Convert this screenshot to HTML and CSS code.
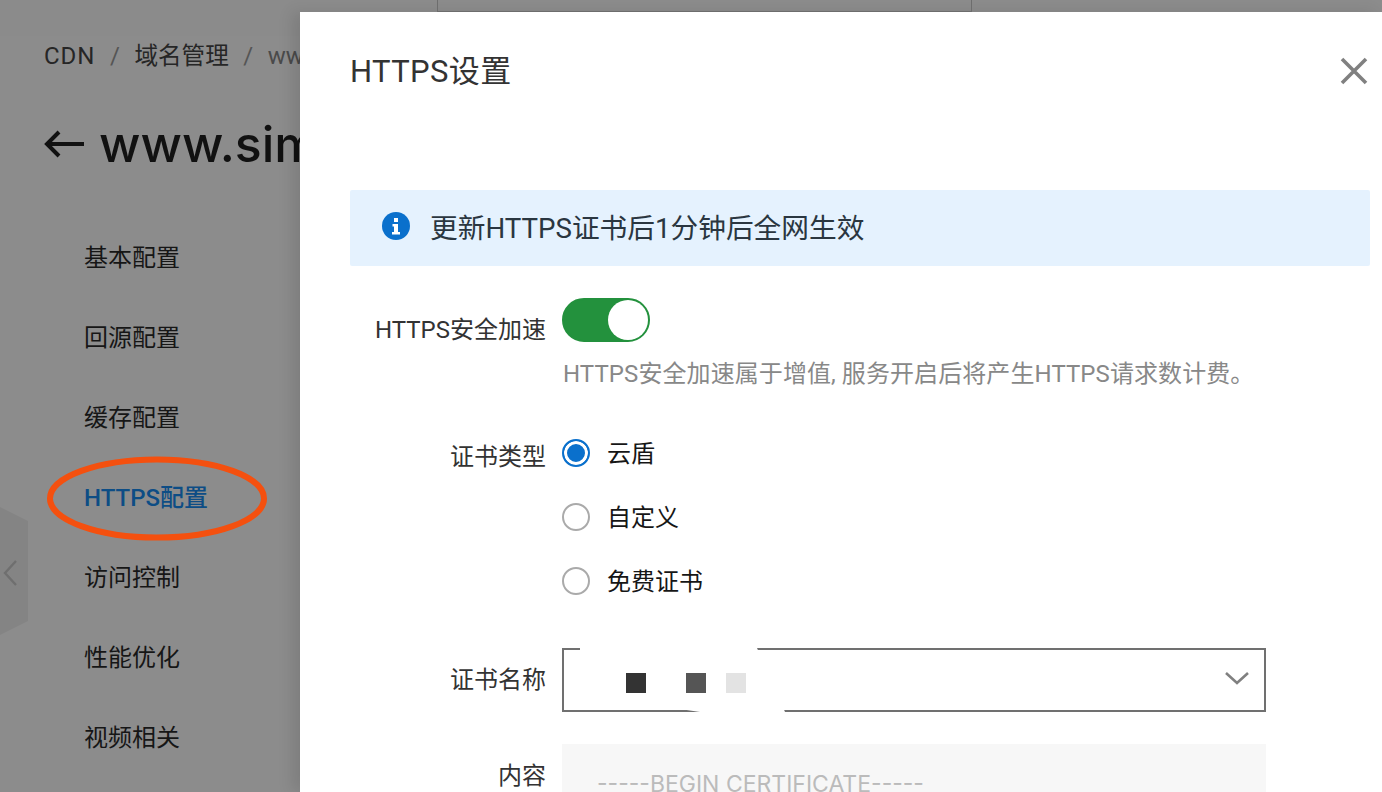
FILE: index.html
```html
<!DOCTYPE html>
<html lang="zh-CN">
<head>
    <meta charset="UTF-8">
    <title>HTTPS设置</title>
    <link rel="stylesheet" href="styles.css">
</head>
<body>
    <div class="page">
        <div class="topbar"><div class="top-search"></div></div>
        <div class="breadcrumb">
            <span class="crumb-cdn">CDN</span><i>/</i><span class="crumb-name">域名管理</span><i>/</i><span class="crumb-last">www.simple.com</span>
        </div>
        <div class="title">
            <svg class="back" width="40" height="30" viewBox="0 0 40 30"><path d="M40 15H3M15 3L3 15l12 12" fill="none" stroke="#111" stroke-width="4"/></svg>
            <span>www.simple.com</span>
        </div>
        <ul class="menu">
            <li>基本配置</li>
            <li>回源配置</li>
            <li>缓存配置</li>
            <li class="active">HTTPS配置</li>
            <li>访问控制</li>
            <li>性能优化</li>
            <li>视频相关</li>
        </ul>
        <div class="collapse">
            <svg width="14" height="26" viewBox="0 0 14 26"><path d="M13 1L2 13l11 12" fill="none" stroke="#6f6f6f" stroke-width="2.400"/></svg>
        </div>
        <svg class="mark" width="222" height="88" viewBox="0 0 222 88"><ellipse cx="111" cy="43.500" rx="107" ry="39" fill="none" stroke="#f4500f" stroke-width="6"/></svg>
    </div>

    <div class="drawer">
        <div class="drawer-head">
            <h2>HTTPS设置</h2>
            <svg class="close" width="30" height="30" viewBox="0 0 30 30"><path d="M3 3l24 24M27 3L3 27" stroke="#808080" stroke-width="3.600"/></svg>
        </div>
        <div class="notice">
            <svg width="28" height="28" viewBox="0 0 28 28"><circle cx="14" cy="14" r="14" fill="#0a70cc"/><path d="M12 6h4v4h-4zM10.500 12h5.500v8h2v2.500h-8V20h2v-5.500h-1.500z" fill="#fff"/></svg>
            <span>更新HTTPS证书后1分钟后全网生效</span>
        </div>
        <div class="row row-switch">
            <label>HTTPS安全加速</label>
            <div class="field">
                <div class="switch"><div class="knob"></div></div>
                <p class="help">HTTPS安全加速属于增值, 服务开启后将产生HTTPS请求数计费。</p>
            </div>
        </div>
        <div class="row row-radio">
            <label>证书类型</label>
            <div class="radios">
                <div class="radio on"><b></b><span>云盾</span></div>
                <div class="radio"><b></b><span>自定义</span></div>
                <div class="radio"><b></b><span>免费证书</span></div>
            </div>
        </div>
        <div class="row row-select">
            <label>证书名称</label>
            <div class="select">
                <div class="blur">
                    <em class="px1"></em><em class="px2"></em><em class="px3"></em>
                </div>
                <svg width="26" height="16" viewBox="0 0 26 16"><path d="M2 3l11 10L24 3" fill="none" stroke="#808080" stroke-width="2.600"/></svg>
            </div>
        </div>
        <div class="row row-content">
            <label>内容</label>
            <div class="cert">-----BEGIN CERTIFICATE-----</div>
        </div>
    </div>
</body>
</html>
```
FILE: styles.css
```css
html, body {
    margin: 0;
    height: 100%;
    overflow: hidden;
}
body {
    display: flex;
    width: 1382px;
    height: 792px;
    background-color: #8c8c8c;
    font-family: "Roboto", "Noto Sans CJK SC", sans-serif;
}
.page {
    position: relative;
    width: 300px;
    flex-shrink: 0;
    overflow: hidden;
    white-space: nowrap;
    color: #111;
}
.topbar {
    height: 36px;
    background-color: #8b8b8b;
}
.breadcrumb {
    margin-top: 5px;
    padding-left: 44px;
    font-size: 24px;
    line-height: 30px;
    color: #262626;
    display: flex;
}
.breadcrumb i {
    font-style: normal;
    margin: 0 14.500px;
    color: #555;
}
.crumb-cdn {
    letter-spacing: 1px;
}
.crumb-name {
    font-size: 23.600px;
}
.crumb-last {
    color: #4a4a4a;
}
.title {
    display: flex;
    align-items: center;
    margin-top: 43px;
    padding-left: 44px;
    height: 60px;
    font-family: "Inter", sans-serif;
    font-size: 50px;
    font-weight: 500;
    color: #111;
}
.back {
    margin-right: 15px;
    flex-shrink: 0;
}
.menu {
    list-style: none;
    margin: 44px 0 0;
    padding: 0 0 0 84px;
    font-size: 24px;
}
.menu li {
    height: 80px;
    line-height: 80px;
    color: #161616;
}
.menu li.active {
    color: #0d4d85;
    font-weight: 500;
}
.collapse {
    position: absolute;
    left: 0;
    top: 507px;
    width: 28px;
    height: 128px;
    background-color: #848484;
    clip-path: polygon(0 0, 100% 11%, 100% 89%, 0 100%);
    display: flex;
    align-items: center;
}
.collapse svg {
    margin-left: 3px;
    margin-top: 4px;
}
.mark {
    position: absolute;
    left: 46px;
    top: 455px;
}
.drawer {
    flex: 1;
    margin-top: 12px;
    background-color: #fff;
    padding: 0 12px 0 50px;
    box-shadow: -8px 0 14px rgba(0, 0, 0, 0.1);
    z-index: 1;
    position: relative;
}
.drawer::before {
    content: "";
    position: absolute;
    left: 137px;
    top: -12px;
    width: 533px;
    height: 11px;
    border: 1px solid #6d6d6d;
    border-top: none;
}
.drawer-head {
    display: flex;
    justify-content: space-between;
    align-items: center;
    height: 118px;
    margin-bottom: 60px;
}
.drawer-head h2 {
    margin: -5px 0 0;
    font-size: 31px;
    font-weight: 400;
    letter-spacing: 0.400px;
    color: #333;
}
.close {
    margin-top: -1px;
    margin-right: 1px;
}
.notice {
    display: flex;
    align-items: center;
    height: 76px;
    padding-left: 32px;
    background-color: #e5f2fe;
    border-radius: 2px;
    font-size: 27.700px;
    color: #2a3640;
}
.notice svg {
    margin-right: 20px;
    margin-top: -4px;
}
.notice span {
    margin-top: -4px;
}
.row {
    display: flex;
    margin-right: 104px;
    font-size: 24px;
    color: #333;
}
.row label {
    width: 196px;
    flex-shrink: 0;
    text-align: right;
    line-height: 30px;
}
.row-switch {
    margin-top: 32px;
}
.row-switch label {
    padding-top: 17px;
}
.field {
    margin-left: 16px;
}
.switch {
    width: 88px;
    height: 44px;
    box-sizing: border-box;
    background-color: #23913d;
    border-radius: 22px;
    border: 2px solid #23913d;
    display: flex;
    justify-content: flex-end;
}
.knob {
    width: 40px;
    height: 40px;
    border-radius: 50%;
    background-color: #fff;
}
.help {
    margin: 17px 0 0 1px;
    color: #888;
    font-size: 24px;
    letter-spacing: 0.080px;
    line-height: 30px;
    white-space: nowrap;
}
.row-radio {
    margin-top: 50px;
}
.row-radio label {
    padding-top: 3px;
}
.radios {
    margin-left: 16px;
    display: flex;
    flex-direction: column;
    gap: 36px;
}
.radio {
    display: flex;
    align-items: center;
    height: 28px;
    color: #161616;
}
.radio span {
    margin-top: -3px;
    margin-left: -1px;
}
.radio b {
    width: 28px;
    height: 28px;
    box-sizing: border-box;
    border: 2px solid #aaa;
    border-radius: 50%;
    margin-right: 18px;
}
.radio.on b {
    border-color: #0a70cc;
    background-color: #0a70cc;
    box-shadow: inset 0 0 0 3px #fff;
}
.row-select {
    margin-top: 53px;
}
.row-select label {
    padding-top: 17px;
}
.select {
    position: relative;
    flex: 1;
    box-sizing: border-box;
    margin-left: 16px;
    height: 64px;
    border: 2px solid #707070;
    display: flex;
    align-items: center;
    justify-content: flex-end;
    padding-right: 14px;
}
.select svg {
    margin-top: -4px;
}
/* scribbled-out part of the name */
.blur {
    position: absolute;
    left: 16px;
    top: -2px;
    width: 205px;
    height: 64px;
    background-color: #fff;
    clip-path: polygon(0 0, 177px 0, 205px 100%, 120px 100%, 0 72%);
    display: flex;
    align-items: center;
    padding-top: 6px;
    box-sizing: border-box;
}
.blur em {
    display: block;
    width: 20px;
    height: 20px;
}
.px1 {
    margin-left: 46px;
    background-color: #333;
}
.px2 {
    margin-left: 40px;
    background-color: #555;
}
.px3 {
    margin-left: 20px;
    background-color: #e3e3e3;
}
.row-content {
    margin-top: 32px;
}
.row-content label {
    padding-top: 17px;
}
.cert {
    flex: 1;
    margin-left: 16px;
    height: 60px;
    padding: 25px 0 0 35px;
    background-color: #f7f7f7;
    color: #bbb;
    font-family: "Inter", sans-serif;
    font-size: 23px;
    line-height: 30px;
}
```
